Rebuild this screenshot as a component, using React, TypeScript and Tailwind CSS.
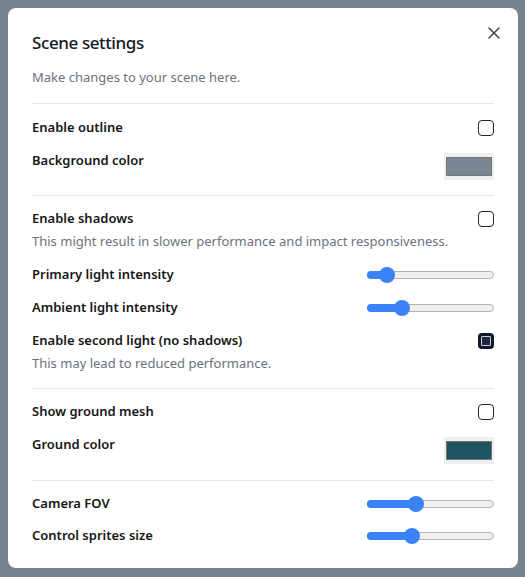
import React from "react";

function Checkbox({ checked = false }: { checked?: boolean }) {
  if (checked) {
    return (
      <div className="mt-[3px] flex h-4 w-4 shrink-0 items-center justify-center rounded-[4px] bg-[#111827]">
        <div className="h-[10px] w-[10px] rounded-[1px] border border-[#cbd0da] bg-[#1e2742]" />
      </div>
    );
  }
  return <div className="mt-[3px] h-4 w-4 shrink-0 rounded-[4px] border-[1.5px] border-[#1f2430] bg-white" />;
}

function Swatch({ color }: { color: string }) {
  return (
    <div className="mt-[3px] flex h-[27px] w-[50px] shrink-0 items-center justify-center bg-[#efefef]">
      <div className="h-[19px] w-[46px] border border-[#767676]" style={{ backgroundColor: color }} />
    </div>
  );
}

function Slider({ pos }: { pos: number }) {
  return (
    <div className="relative mt-[3px] h-4 w-[127px] shrink-0">
      <div className="absolute left-0 right-0 top-[4px] h-2 rounded-full border border-[#b4b4b4] bg-[#efefef]" />
      <div className="absolute left-0 top-[4px] h-2 rounded-full bg-[#3b82f6]" style={{ width: pos }} />
      <div className="absolute top-0 h-4 w-4 rounded-full bg-[#3b82f6]" style={{ left: pos - 8 }} />
    </div>
  );
}

function Row({ label, children, desc }: { label: string; children: React.ReactNode; desc?: string }) {
  return (
    <div>
      <div className="flex items-start justify-between">
        <span className="text-[13px] leading-[21px] font-semibold text-[#161616]">{label}</span>
        {children}
      </div>
      {desc && <p className="mt-[2px] text-[13px] leading-[21px] text-[#6b7280]">{desc}</p>}
    </div>
  );
}

function Divider() {
  return <div className="h-px bg-[#e5e7eb]" />;
}

export default function App() {
  return (
    <div
      className="h-[577px] w-[525px] bg-[#778390] p-2"
      style={{ fontFamily: '"Noto Sans", "Open Sans", sans-serif' }}
    >
      <div className="relative w-[510px] rounded-lg bg-white px-6 pt-[21px] pb-[22px]">
        <button className="absolute right-[14px] top-[15px] flex h-5 w-5 items-center justify-center text-[#374151]">
          <svg width="20" height="20" viewBox="0 0 24 24" fill="none" stroke="currentColor" strokeWidth="1.8" strokeLinecap="round">
            <path d="M18 6 6 18" />
            <path d="m6 6 12 12" />
          </svg>
        </button>
        <h2 className="text-[17px] leading-7 font-medium tracking-[-0.4px] text-[#111827]">Scene settings</h2>
        <p className="mt-[10px] text-[13px] leading-5 text-[#6b7280]">Make changes to your scene here.</p>
        <div className="mt-4">
          <Divider />
        </div>

        <div className="flex flex-col gap-3 pt-[13px] pb-[15px]">
          <Row label="Enable outline">
            <Checkbox />
          </Row>
          <Row label="Background color">
            <Swatch color="#7b8894" />
          </Row>
        </div>
        <Divider />

        <div className="flex flex-col gap-3 pt-3 pb-[14px]">
          <Row label="Enable shadows" desc="This might result in slower performance and impact responsiveness.">
            <Checkbox />
          </Row>
          <Row label="Primary light intensity">
            <Slider pos={20} />
          </Row>
          <Row label="Ambient light intensity">
            <Slider pos={35} />
          </Row>
          <Row label="Enable second light (no shadows)" desc="This may lead to reduced performance.">
            <Checkbox checked />
          </Row>
        </div>
        <Divider />

        <div className="flex flex-col gap-3 pt-3 pb-4">
          <Row label="Show ground mesh">
            <Checkbox />
          </Row>
          <Row label="Ground color">
            <Swatch color="#1e5461" />
          </Row>
        </div>
        <Divider />

        <div className="flex flex-col gap-[11px] pt-3">
          <Row label="Camera FOV">
            <Slider pos={49} />
          </Row>
          <Row label="Control sprites size">
            <Slider pos={45} />
          </Row>
        </div>
      </div>
    </div>
  );
}
